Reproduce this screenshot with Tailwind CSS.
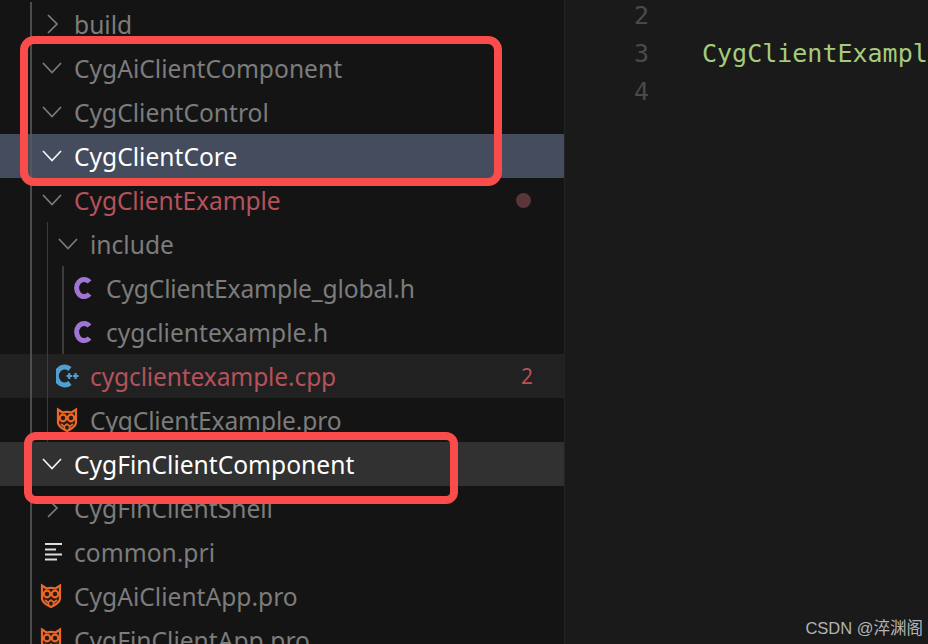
<!DOCTYPE html>
<html lang="zh">
<head>
    <meta charset="UTF-8">
    <title>CygClientExample</title>
    <script src="https://cdn.jsdelivr.net/npm/@tailwindcss/browser@4"></script>
</head>
<body class="w-[928px] h-[644px] overflow-hidden bg-[#1a1a1a]">
<div class="relative flex w-[928px] h-[644px] overflow-hidden">

    <!-- Explorer tree -->
    <aside class="relative w-[565px] h-[644px] shrink-0 pt-[2px] overflow-hidden bg-[#141414] border-r border-[#232323] font-['Noto_Sans',sans-serif] text-[24.6px] text-[#7c7c7c]">
        <div class="flex items-center h-11 pl-[40px]">
            <svg class="w-[34px] h-11 shrink-0" viewBox="0 0 34 44" fill="none" stroke="#7c7c7c" stroke-width="1.7"><path d="M8 13 L17 22 L8 31"/></svg>
            <span class="pt-[2px]">build</span>
        </div>
        <div class="flex items-center h-11 pl-[40px]">
            <svg class="w-[34px] h-11 shrink-0" viewBox="0 0 34 44" fill="none" stroke="#7c7c7c" stroke-width="1.7"><path d="M3 17 L12 26.5 L21 17"/></svg>
            <span class="pt-[2px]">CygAiClientComponent</span>
        </div>
        <div class="flex items-center h-11 pl-[40px]">
            <svg class="w-[34px] h-11 shrink-0" viewBox="0 0 34 44" fill="none" stroke="#7c7c7c" stroke-width="1.7"><path d="M3 17 L12 26.5 L21 17"/></svg>
            <span class="pt-[2px]">CygClientControl</span>
        </div>
        <div class="flex items-center h-11 pl-[40px] bg-[#444c5e] text-white">
            <svg class="w-[34px] h-11 shrink-0" viewBox="0 0 34 44" fill="none" stroke="#f2f2f2" stroke-width="1.7"><path d="M3 17 L12 26.5 L21 17"/></svg>
            <span class="pt-[2px]">CygClientCore</span>
        </div>
        <div class="flex items-center justify-between h-11 pl-[40px] pr-[33px] text-[#b4525b]">
            <div class="flex items-center">
                <svg class="w-[34px] h-11 shrink-0" viewBox="0 0 34 44" fill="none" stroke="#7c7c7c" stroke-width="1.7"><path d="M3 17 L12 26.5 L21 17"/></svg>
                <span class="pt-[2px] tracking-[-0.1px]">CygClientExample</span>
            </div>
            <span class="w-[15px] h-[15px] rounded-full bg-[#5a3638]"></span>
        </div>
        <div class="flex items-center h-11 pl-[56px]">
            <svg class="w-[34px] h-11 shrink-0" viewBox="0 0 34 44" fill="none" stroke="#7c7c7c" stroke-width="1.7"><path d="M3 17 L12 26.5 L21 17"/></svg>
            <span class="pt-[2px]">include</span>
        </div>
        <div class="flex items-center h-11 pl-[72px]">
            <svg class="w-[34px] h-11 shrink-0" viewBox="0 0 34 44" fill="none" stroke="#a074d4" stroke-width="5"><path d="M17.5 16 A7.5 8.6 0 1 0 17.5 28"/></svg>
            <span class="pt-[2px] tracking-[-0.15px]">CygClientExample_global.h</span>
        </div>
        <div class="flex items-center h-11 pl-[72px]">
            <svg class="w-[34px] h-11 shrink-0" viewBox="0 0 34 44" fill="none" stroke="#a074d4" stroke-width="5"><path d="M17.5 16 A7.5 8.6 0 1 0 17.5 28"/></svg>
            <span class="pt-[2px]">cygclientexample.h</span>
        </div>
        <div class="flex items-center justify-between h-11 pl-[56px] pr-[31px] bg-[#212121] text-[#b4525b]">
            <div class="flex items-center">
                <svg class="w-[34px] h-11 shrink-0" viewBox="0 0 34 44" fill="none" stroke="#4f9fd0"><path d="M14 15 A8.4 9 0 1 0 14 29" stroke-width="5"/><path d="M10.5 22 H16 M13.2 19 V25 M16.8 22 H22.5 M19.6 19 V25" stroke-width="2.2"/></svg>
                <span class="pt-[2px] tracking-[-0.15px]">cygclientexample.cpp</span>
            </div>
            <span class="pt-[2px] text-[21px]">2</span>
        </div>
        <div class="flex items-center h-11 pl-[56px]">
            <svg class="w-[34px] h-11 shrink-0" viewBox="0 0 34 44" fill="none" stroke="#e8682a" stroke-width="2.2"><path d="M2 11.5 L6.5 14.5 Q11 13.4 15.5 14.5 L20 11.5 L20 25 Q19 29.5 11 33 Q3 29.5 2 25 Z" fill="#2a1a12"/><circle cx="7" cy="20" r="3.3"/><circle cx="15" cy="20" r="3.3"/><path d="M5 26 L8 28.5 L11 26 L14 28.5 L17 26 M8.5 29 V31 M13.5 29 V31" stroke-width="1.7"/></svg>
            <span class="pt-[2px] tracking-[-0.15px]">CygClientExample.pro</span>
        </div>
        <div class="flex items-center h-11 pl-[40px] bg-[#313131] text-white">
            <svg class="w-[34px] h-11 shrink-0" viewBox="0 0 34 44" fill="none" stroke="#f2f2f2" stroke-width="1.7"><path d="M3 17 L12 26.5 L21 17"/></svg>
            <span class="pt-[2px]">CygFinClientComponent</span>
        </div>
        <div class="flex items-center h-11 pl-[40px]">
            <svg class="w-[34px] h-11 shrink-0" viewBox="0 0 34 44" fill="none" stroke="#7c7c7c" stroke-width="1.7"><path d="M8 13 L17 22 L8 31"/></svg>
            <span class="pt-[2px]">CygFinClientShell</span>
        </div>
        <div class="flex items-center h-11 pl-[40px]">
            <svg class="w-[34px] h-11 shrink-0" viewBox="0 0 34 44" fill="#dcdcdc"><rect x="5" y="13" width="17" height="2"/><rect x="5" y="18.5" width="11" height="2"/><rect x="5" y="23.5" width="17" height="2"/><rect x="5" y="28.5" width="12" height="2"/></svg>
            <span class="pt-[2px]">common.pri</span>
        </div>
        <div class="flex items-center h-11 pl-[40px]">
            <svg class="w-[34px] h-11 shrink-0" viewBox="0 0 34 44" fill="none" stroke="#e8682a" stroke-width="2.2"><path d="M2 11.5 L6.5 14.5 Q11 13.4 15.5 14.5 L20 11.5 L20 25 Q19 29.5 11 33 Q3 29.5 2 25 Z" fill="#2a1a12"/><circle cx="7" cy="20" r="3.3"/><circle cx="15" cy="20" r="3.3"/><path d="M5 26 L8 28.5 L11 26 L14 28.5 L17 26 M8.5 29 V31 M13.5 29 V31" stroke-width="1.7"/></svg>
            <span class="pt-[2px]">CygAiClientApp.pro</span>
        </div>
        <div class="flex items-center h-11 pl-[40px]">
            <svg class="w-[34px] h-11 shrink-0" viewBox="0 0 34 44" fill="none" stroke="#e8682a" stroke-width="2.2"><path d="M2 11.5 L6.5 14.5 Q11 13.4 15.5 14.5 L20 11.5 L20 25 Q19 29.5 11 33 Q3 29.5 2 25 Z" fill="#2a1a12"/><circle cx="7" cy="20" r="3.3"/><circle cx="15" cy="20" r="3.3"/><path d="M5 26 L8 28.5 L11 26 L14 28.5 L17 26 M8.5 29 V31 M13.5 29 V31" stroke-width="1.7"/></svg>
            <span class="pt-[2px]">CygFinClientApp.pro</span>
        </div>

        <!-- Indent guides -->
        <div class="absolute left-[30px] top-[2px] bottom-0 w-[2px] bg-[#5a5a5a]/80"></div>
        <div class="absolute left-[47px] top-[222px] h-[220px] w-[1px] bg-[#3c3c3c]"></div>
        <div class="absolute left-[62px] top-[266px] h-[88px] w-[2px] bg-[#3c3c3c]"></div>
    </aside>

    <!-- Editor -->
    <main class="flex flex-1 -mt-[3px] font-['DejaVu_Sans_Mono',monospace] text-[25px] leading-[38px]">
        <div class="w-[84px] shrink-0 text-right text-[#4a4a4a]">
            <div>2</div>
            <div>3</div>
            <div>4</div>
        </div>
        <div class="pl-[53px] whitespace-nowrap text-[#a4cc7c]">
            <div>&nbsp;</div>
            <div>CygClientExample</div>
        </div>
    </main>

    <!-- Red annotation boxes -->
    <div class="absolute left-[20px] top-[36px] w-[482px] h-[150px] border-[8px] border-[#fb4c4c] rounded-[14px]"></div>
    <div class="absolute left-[24px] top-[432px] w-[434px] h-[72px] border-[8px] border-[#fb4c4c] rounded-[12px]"></div>

    <!-- Watermark -->
    <div class="absolute right-[5px] top-[616px] font-['Liberation_Sans','Noto_Sans_CJK_SC',sans-serif] text-[16.5px] text-[#b4b4b4]">CSDN @淬渊阁</div>
</div>
</body>
</html>
